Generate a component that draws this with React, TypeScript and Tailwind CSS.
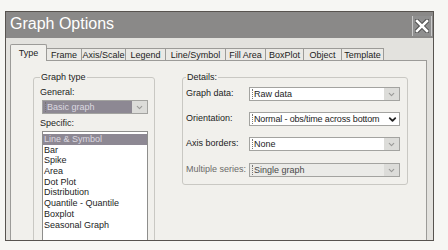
import { ChevronDown } from 'lucide-react';

const tabs = [
  { label: 'Type', w: 'w-[37px]' },
  { label: 'Frame', w: 'w-[35px]' },
  { label: 'Axis/Scale', w: 'w-[44px]' },
  { label: 'Legend', w: 'w-[40px]' },
  { label: 'Line/Symbol', w: 'w-[60px]' },
  { label: 'Fill Area', w: 'w-[40px]' },
  { label: 'BoxPlot', w: 'w-[38px]' },
  { label: 'Object', w: 'w-[38px]' },
  { label: 'Template', w: 'w-[42px]' },
];

const specific = [
  'Line & Symbol',
  'Bar',
  'Spike',
  'Area',
  'Dot Plot',
  'Distribution',
  'Quantile - Quantile',
  'Boxplot',
  'Seasonal Graph',
];

function Combo({
  value,
  variant = 'normal',
  className = '',
}: {
  value: string;
  variant?: 'normal' | 'selected' | 'disabled' | 'focus';
  className?: string;
}) {
  const box =
    variant === 'selected'
      ? 'bg-[#8d8893] text-[#dcd8e0]'
      : variant === 'disabled'
        ? 'bg-[#ebebe8] text-[#4a4a4a]'
        : 'bg-white text-[#1c1c1c]';
  return (
    <div className={`flex h-[14px] border border-[#a3a3a0] ${box} ${className}`}>
      <div
        className={`min-w-0 flex-1 overflow-hidden whitespace-nowrap pl-[2px] leading-[12px] ${
          variant === 'focus' ? 'tracking-[-0.15px]' : ''
        }`}
      >
        <span className="border-l border-dotted border-[#777] pl-[1px]">{value}</span>
      </div>
      {variant === 'focus' ? (
        <div className="flex w-[14px] shrink-0 items-center justify-center bg-white">
          <ChevronDown size={11} strokeWidth={4} className="text-[#222]" />
        </div>
      ) : (
        <div className="flex w-[15px] shrink-0 items-center justify-center bg-[#dcdcd9]">
          <ChevronDown size={9} strokeWidth={3} className="text-[#9a9a98]" />
        </div>
      )}
    </div>
  );
}

export default function App() {
  return (
    <div
      className="h-[250px] w-[448px] overflow-hidden bg-[#f6f6f3] pl-[5px] pt-[11px] text-[9px] text-[#1c1c1c]"
      style={{ fontFamily: '"Liberation Sans", Arial, sans-serif' }}
    >
      <div className="flex h-[230px] w-[429px] flex-col overflow-hidden border border-[#57534f] bg-[#e3e2de]">
        {/* title bar */}
        <div className="flex h-[26px] shrink-0 items-start justify-between bg-[#8a8988] pl-[4px] pr-[1px]">
          <span className="pt-[3px] text-[16px] leading-[18px] text-white">Graph Options</span>
          <div className="mt-[4px] flex h-[20px] w-[20px] items-center justify-center border-x border-[#c9c9c9] bg-[#8f8f8f]">
            <svg width="14" height="14" viewBox="0 0 14 14">
              <path d="M2 2 L12 12 M12 2 L2 12" stroke="#4a4a4a" strokeWidth="4.5" strokeLinecap="square" />
              <path d="M2 2 L12 12 M12 2 L2 12" stroke="#ffffff" strokeWidth="2.6" strokeLinecap="square" />
            </svg>
          </div>
        </div>

        <div className="flex flex-1 flex-col pl-[4px] pr-[6px]">
          {/* tabs */}
          <div className="flex h-[22px] shrink-0 items-end">
            {tabs.map((t, i) =>
              i === 0 ? (
                <div
                  key={t.label}
                  className={`${t.w} relative z-10 -mb-px flex h-[17px] shrink-0 items-start justify-center rounded-t-[2px] border-x border-t border-[#9c9b98] bg-[#f1f0ec] pt-[3px] leading-[10px]`}
                >
                  {t.label}
                </div>
              ) : (
                <div
                  key={t.label}
                  className={`${t.w} flex h-[12px] shrink-0 items-center justify-center border-r border-t border-[#9c9b98] bg-[#eae9e5] leading-[10px]`}
                >
                  {t.label}
                </div>
              ),
            )}
          </div>

          {/* panel */}
          <div className="flex flex-1 items-start gap-[27px] overflow-hidden border border-b-0 border-[#9c9b98] bg-[#f1f0ec] pl-[22px] pt-[11px]">
            <fieldset className="h-[200px] w-[122px] shrink-0 rounded-[3px] border border-[#c9c8c3] pl-[6px] pr-[6px] pt-[5px]">
              <legend className="px-[1px] leading-[10px]">Graph type</legend>
              <div className="leading-[10px]">General:</div>
              <Combo value="Basic graph" variant="selected" className="ml-[2px] mt-[3px] w-[106px]" />
              <div className="mt-[4px] leading-[10px]">Specific:</div>
              <div className="ml-[2px] mt-[3px] h-[120px] w-[106px] border border-[#8e8e8c] bg-white pt-[2px]">
                {specific.map((s, i) => (
                  <div
                    key={s}
                    className={`h-[10.7px] pl-[1px] leading-[10.7px] ${
                      i === 0 ? 'bg-[#8d8893] text-[#dcd8e0]' : ''
                    }`}
                  >
                    {s}
                  </div>
                ))}
              </div>
            </fieldset>

            <fieldset className="w-[225px] shrink-0 rounded-[3px] border border-[#c9c8c3] pb-[7px] pl-[3px] pr-[7px] pt-[5px]">
              <legend className="px-[1px] leading-[10px]">Details:</legend>
              <div className="flex flex-col gap-[11px]">
                <div className="flex items-center">
                  <span className="w-[63px] shrink-0">Graph data:</span>
                  <Combo value="Raw data" className="w-[151px]" />
                </div>
                <div className="flex items-center">
                  <span className="w-[63px] shrink-0">Orientation:</span>
                  <Combo value="Normal - obs/time across bottom" variant="focus" className="w-[151px]" />
                </div>
                <div className="flex items-center">
                  <span className="w-[63px] shrink-0">Axis borders:</span>
                  <Combo value="None" className="w-[151px]" />
                </div>
                <div className="mt-px flex items-center">
                  <span className="w-[63px] shrink-0 text-[#6b6b69]">Multiple series:</span>
                  <Combo value="Single graph" variant="disabled" className="w-[151px]" />
                </div>
              </div>
            </fieldset>
          </div>
        </div>
      </div>
    </div>
  );
}
